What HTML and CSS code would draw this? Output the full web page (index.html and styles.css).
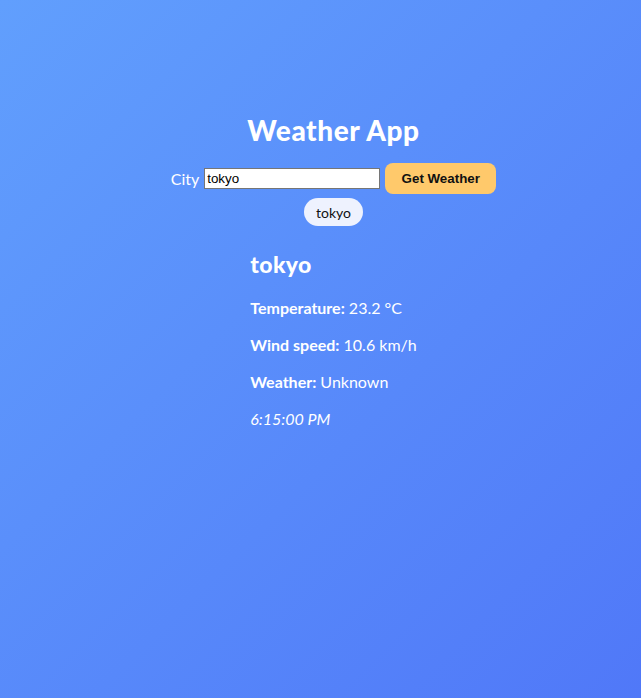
FILE: index.html
```html
<!DOCTYPE html>
<html>
<head>
<meta charset="utf-8">
<title>Weather App</title>
<link rel="stylesheet" href="styles.css">
</head>
<body>
<main class="app">
  <h1 class="title">Weather App</h1>
  <form class="search">
    <label class="label" for="city">City</label>
    <input class="input" id="city" type="text" value="tokyo">
    <button class="btn" type="button">Get Weather</button>
  </form>
  <div class="history">
    <span class="pill">tokyo</span>
  </div>
  <section class="result">
    <h2 class="city">tokyo</h2>
    <p class="row"><b>Temperature:</b> 23.2 °C</p>
    <p class="row"><b>Wind speed:</b> 10.6 km/h</p>
    <p class="row"><b>Weather:</b> Unknown</p>
    <p class="row time">6:15:00 PM</p>
  </section>
</main>
</body>
</html>
```
FILE: styles.css
```css
html, body {
  margin: 0;
  height: 100%;
}
body {
  background: linear-gradient(135deg, #619ffd 0%, #5078f8 100%);
  font-family: Lato, "Noto Sans", sans-serif;
  color: #fff;
}
.app {
  padding: 111px 0 0 26px;
  text-align: center;
}
.title {
  margin: 0;
  font-size: 28px;
  line-height: 38px;
  font-weight: 900;
  letter-spacing: 0.6px;
}
.search {
  margin-top: 14px;
  display: flex;
  justify-content: center;
  align-items: center;
  gap: 5px;
  height: 31px;
}
.label {
  font-size: 16px;
}
.input {
  box-sizing: border-box;
  width: 176px;
  height: 21px;
  padding: 1px 2px;
  border: 1px solid #767676;
  font-family: "Liberation Sans", Arial, sans-serif;
  font-size: 13.33px;
  color: #000;
  background: #fff;
}
.btn {
  box-sizing: border-box;
  width: 111px;
  height: 31px;
  border: none;
  border-radius: 8px;
  background: #ffc96b;
  color: #111;
  font-family: "Liberation Sans", Arial, sans-serif;
  font-weight: 700;
  font-size: 13.33px;
}
.history {
  margin-top: 4px;
  display: flex;
  justify-content: center;
}
.pill {
  display: inline-block;
  box-sizing: border-box;
  height: 28px;
  line-height: 29px;
  padding: 0 12px;
  border-radius: 14px;
  background: #eef2fe;
  color: #111;
  font-size: 14px;
}
.result {
  display: inline-block;
  text-align: left;
  margin-top: 23px;
}
.city {
  margin: 0 0 18px;
  font-size: 23px;
  line-height: 30px;
  font-weight: 900;
  letter-spacing: 0.4px;
}
.row {
  margin: 0 0 16px;
  font-size: 16px;
  line-height: 21px;
}
.time {
  font-style: italic;
}
```
